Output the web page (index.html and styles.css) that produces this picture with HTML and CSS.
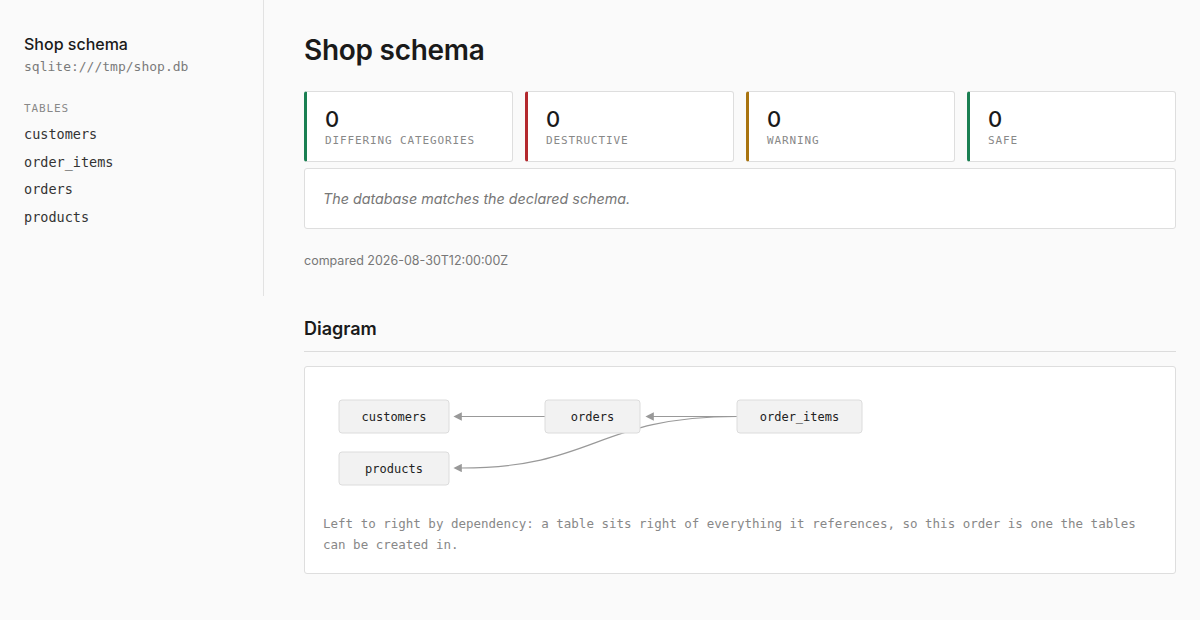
FILE: index.html
```html
<!DOCTYPE html>
<html lang="en">

<head>
    <meta charset="UTF-8">
    <meta name="viewport" content="width=device-width, initial-scale=1.0">
    <title>Shop schema</title>
    <link rel="stylesheet" href="styles.css">
</head>

<body>
    <aside class="sidebar">
        <div class="db-name">Shop schema</div>
        <div class="db-url">sqlite:///tmp/shop.db</div>
        <div class="side-label">Tables</div>
        <ul class="table-list">
            <li><a href="#customers">customers</a></li>
            <li><a href="#order_items">order_items</a></li>
            <li><a href="#orders">orders</a></li>
            <li><a href="#products">products</a></li>
        </ul>
    </aside>

    <main class="content">
        <h1>Shop schema</h1>

        <div class="stats">
            <div class="stat stat-total">
                <div class="stat-num">0</div>
                <div class="stat-label">Differing categories</div>
            </div>
            <div class="stat stat-destructive">
                <div class="stat-num">0</div>
                <div class="stat-label">Destructive</div>
            </div>
            <div class="stat stat-warning">
                <div class="stat-num">0</div>
                <div class="stat-label">Warning</div>
            </div>
            <div class="stat stat-safe">
                <div class="stat-num">0</div>
                <div class="stat-label">Safe</div>
            </div>
        </div>

        <div class="message">The database matches the declared schema.</div>

        <p class="compared">compared 2026-08-30T12:00:00Z</p>

        <h2>Diagram</h2>
        <div class="panel">
            <svg class="diagram" width="834" height="120" viewBox="0 0 834 120">
                <defs>
                    <marker id="arrow" viewBox="0 0 10 10" refX="1" refY="5" markerWidth="7" markerHeight="7" orient="auto-start-reverse">
                        <path d="M0,0 L10,5 L0,10 z" fill="#999"></path>
                    </marker>
                </defs>
                <!-- edges point from a table to what it references -->
                <g class="edges">
                    <path d="M222,31.5 L138,31.5" marker-end="url(#arrow)"></path>
                    <path d="M414,31.5 L330,31.5" marker-end="url(#arrow)"></path>
                    <path d="M414,31.5 C273,31.5 273,83 138,83" marker-end="url(#arrow)"></path>
                </g>
                <g class="nodes">
                    <rect x="16" y="15" width="110" height="33" rx="3"></rect>
                    <text x="71" y="32">customers</text>
                    <rect x="222" y="15" width="95" height="33" rx="3"></rect>
                    <text x="269.5" y="32">orders</text>
                    <rect x="414" y="15" width="125" height="33" rx="3"></rect>
                    <text x="476.5" y="32">order_items</text>
                    <rect x="16" y="67" width="110" height="33" rx="3"></rect>
                    <text x="71" y="84">products</text>
                </g>
            </svg>
            <p class="caption">Left to right by dependency: a table sits right of everything it references, so this order is one the tables can be created in.</p>
        </div>
    </main>
</body>

</html>
```

FILE: styles.css
```css
* {
    box-sizing: border-box;
    margin: 0;
    padding: 0;
}

body {
    font-family: Inter, "Liberation Sans", sans-serif;
    background: #fafafa;
    color: #1a1a1a;
    display: flex;
    align-items: flex-start;
}

.sidebar {
    width: 264px;
    flex-shrink: 0;
    padding: 34px 24px 64px;
    border-right: 1px solid #e2e2e2;
}

.db-name {
    font-size: 16px;
    font-weight: 500;
    line-height: 20px;
}

.db-url {
    font-family: "DejaVu Sans Mono", monospace;
    font-size: 13px;
    color: #7a7a7a;
    margin-top: 5px;
}

.side-label {
    font-family: "DejaVu Sans Mono", monospace;
    font-size: 11px;
    letter-spacing: 0.08em;
    text-transform: uppercase;
    color: #888;
    margin-top: 28px;
}

.table-list {
    list-style: none;
    margin-top: 6px;
    font-family: "DejaVu Sans Mono", monospace;
    font-size: 13.5px;
}

.table-list li {
    line-height: 27.7px;
}

.table-list a {
    color: #333;
    text-decoration: none;
}

.content {
    flex: 1;
    padding: 32px 24px 40px 40px;
}

h1 {
    font-size: 28px;
    font-weight: 600;
    line-height: 36px;
    letter-spacing: -0.01em;
}

.stats {
    display: grid;
    grid-template-columns: repeat(4, 1fr);
    gap: 12px;
    margin-top: 23px;
}

.stat {
    background: #fff;
    border: 1px solid #dedede;
    border-left: 3px solid #1a7f52;
    border-radius: 3px;
    padding: 14px 18px 13px;
}

.stat-destructive {
    border-left-color: #b3282d;
}

.stat-warning {
    border-left-color: #a8730f;
}

.stat-safe {
    border-left-color: #1a7f52;
}

.stat-num {
    font-size: 22px;
    font-weight: 500;
    line-height: 26px;
}

.stat-label {
    font-family: "DejaVu Sans Mono", monospace;
    font-size: 11px;
    letter-spacing: 0.08em;
    text-transform: uppercase;
    color: #888;
    line-height: 14px;
    margin-top: 2px;
}

.message {
    background: #fff;
    border: 1px solid #dedede;
    border-radius: 3px;
    padding: 19px 18px 18px;
    margin-top: 6px;
    font-size: 14.3px;
    line-height: 22px;
    font-style: italic;
    color: #777;
}

.compared {
    font-size: 12.5px;
    line-height: 18px;
    color: #777;
    margin-top: 23px;
}

h2 {
    font-size: 18px;
    font-weight: 600;
    line-height: 24px;
    margin-top: 47px;
    padding-bottom: 10px;
    border-bottom: 1px solid #dcdcdc;
}

.panel {
    background: #fff;
    border: 1px solid #dedede;
    border-radius: 3px;
    padding: 18px;
    margin-top: 14px;
}

.diagram {
    display: block;
}

.edges path {
    fill: none;
    stroke: #999;
    stroke-width: 1.2;
}

.nodes rect {
    fill: #f2f2f2;
    stroke: #dcdcdc;
    stroke-width: 1;
}

.nodes text {
    font-family: "DejaVu Sans Mono", monospace;
    font-size: 12px;
    fill: #222;
    text-anchor: middle;
    dominant-baseline: middle;
}

.caption {
    font-family: "DejaVu Sans Mono", monospace;
    font-size: 12.5px;
    line-height: 21px;
    color: #888;
    margin-top: 8px;
}
```
